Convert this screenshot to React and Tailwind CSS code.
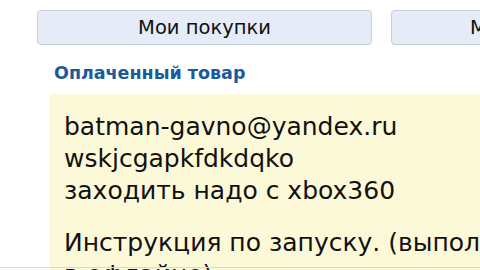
export default function App() {
  return (
    <div className="w-[480px] h-[270px] overflow-hidden bg-white relative" style={{ fontFamily: '"DejaVu Sans", Verdana, sans-serif' }}>
      <div className="flex gap-[19px] pl-[37px] pt-[10px]">
        <div className="w-[335px] h-[35px] shrink-0 rounded-[4px] border border-[#c6ced9] bg-[#e5ecf7] flex items-center justify-center text-[19.5px] text-[#111]">
          Мои покупки
        </div>
        <div className="w-[200px] h-[35px] shrink-0 rounded-[4px] border border-[#c6ced9] bg-[#e5ecf7] flex items-center pl-[78px] text-[19.5px] text-[#111]">
          Мои
        </div>
      </div>
      <div className="pl-[54px] pt-[17px] text-[17.5px] font-bold text-[#1b5a9c] leading-[22px] whitespace-nowrap">
        Оплаченный товар
      </div>
      <div className="ml-[50px] mt-[10px] bg-[#fcf9d8] pl-[14px] pt-[17px] h-[200px] text-[25px] leading-[32px] text-[#111] whitespace-nowrap">
        <p>batman-gavno@yandex.ru<br />wskjcgapkfdkdqko<br />заходить надо с xbox360</p>
        <p className="mt-[20px]">Инструкция по запуску. (выполнить<br />в офлайне)</p>
      </div>
      <div className="absolute left-0 right-0 top-[267px] h-[1px] bg-[#d8d8d8]"></div>
    </div>
  );
}
